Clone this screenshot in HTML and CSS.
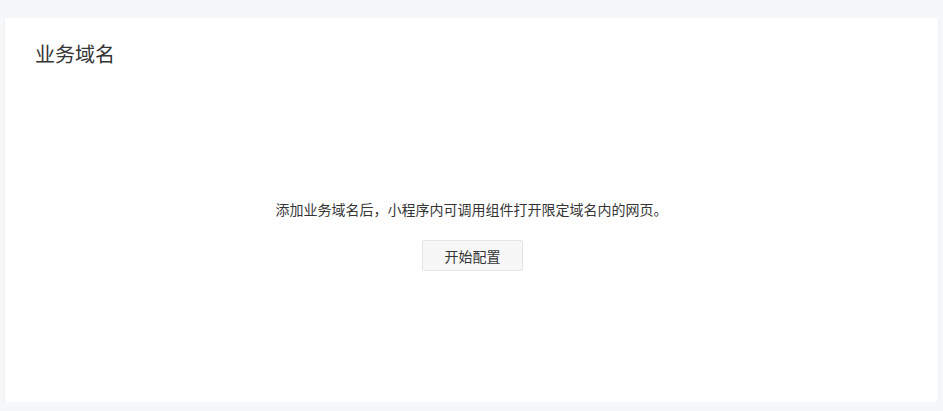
FILE: index.html
```html
<!DOCTYPE html>
<html lang="zh-CN">
<head>
    <meta charset="UTF-8">
    <meta name="viewport" content="width=device-width, initial-scale=1.0">
    <title>业务域名</title>
    <link rel="stylesheet" href="styles.css">
</head>
<body>
    <div class="panel">
        <h2 class="panel-title">业务域名</h2>
        <div class="empty">
            <p class="empty-desc">添加业务域名后，小程序内可调用组件打开限定域名内的网页。</p>
            <button class="btn-default">开始配置</button>
        </div>
    </div>
</body>
</html>
```

FILE: styles.css
```css
body {
    font-family: "Liberation Sans", "Noto Sans CJK SC", sans-serif;
    margin: 0;
    padding: 18px 5px 0;
    background-color: #f6f7f9;
    color: #353535;
}
.panel {
    height: 384px;
    box-sizing: border-box;
    padding: 23px 30px 0;
    background-color: #fff;
    border-radius: 2px;
    box-shadow: 0 1px 2px rgba(0, 0, 0, 0.08);
}
.panel-title {
    margin: 0;
    font-size: 20px;
    font-weight: normal;
    line-height: 28px;
}
.empty {
    display: flex;
    flex-direction: column;
    align-items: center;
    padding-top: 131px;
}
.empty-desc {
    margin: 0 0 20px;
    font-size: 14px;
    line-height: 20px;
}
.btn-default {
    width: 101px;
    height: 31px;
    margin-left: 2px;
    padding: 0;
    font-family: inherit;
    font-size: 14px;
    color: #353535;
    background-color: #f7f7f7;
    border: 1px solid #e5e5e5;
    border-radius: 2px;
    cursor: pointer;
}
```
